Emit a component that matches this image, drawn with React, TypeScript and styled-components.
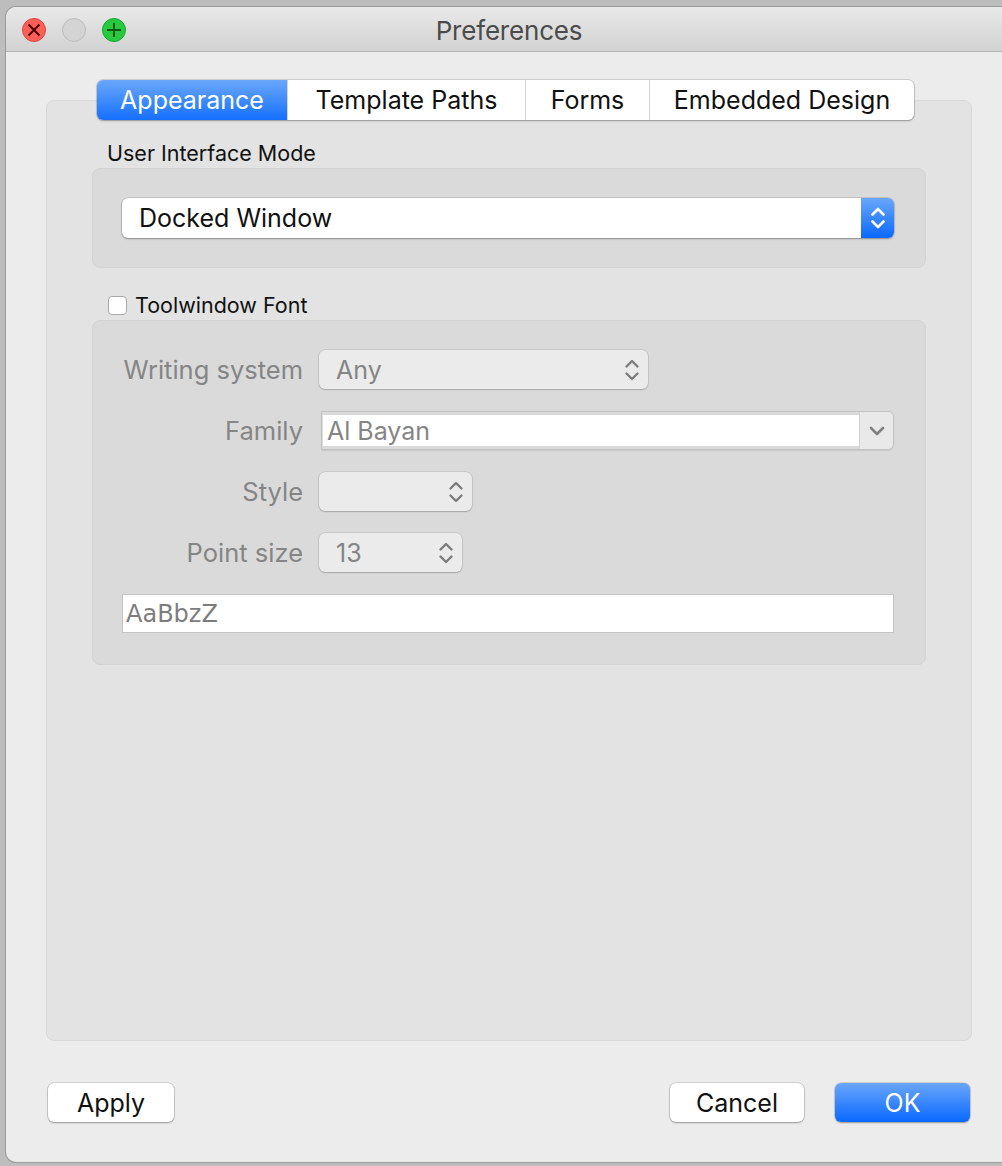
import React from "react";
import styled, { createGlobalStyle, css } from "styled-components";

const Global = createGlobalStyle`
  html, body { margin: 0; padding: 0; }
  body {
    background: #bdbdbd;
    font-family: Inter, "Liberation Sans", Arial, sans-serif;
    overflow: hidden;
    -webkit-font-smoothing: antialiased;
  }
  * { box-sizing: border-box; }
`;

const Page = styled.div`
  width: 1002px;
  height: 1166px;
  padding: 7px 0 0 6px;
  overflow: hidden;
`;

const Window = styled.div`
  width: 1006px;
  height: 1155px;
  background: #ececec;
  border-radius: 10px;
  box-shadow: 0 0 0 1px rgba(0, 0, 0, 0.18);
  display: flex;
  flex-direction: column;
  overflow: hidden;
`;

const TitleBar = styled.div`
  height: 45px;
  flex: none;
  display: grid;
  grid-template-columns: 1fr auto 1fr;
  align-items: center;
  padding-top: 2px;
  background: linear-gradient(#e9e9e9, #d2d2d2);
  border-bottom: 1px solid #b4b4b4;
`;

const Lights = styled.div`
  display: flex;
  gap: 16px;
  padding-left: 16px;
`;

const Light = styled.div<{ $kind: "close" | "min" | "max" }>`
  width: 24px;
  height: 24px;
  border-radius: 50%;
  display: flex;
  align-items: center;
  justify-content: center;
  ${(p) =>
    p.$kind === "close"
      ? css`background: #fd5e57; border: 1px solid #e0443e;`
      : p.$kind === "max"
      ? css`background: #28c840; border: 1px solid #14a92a;`
      : css`background: #d4d4d4; border: 1px solid #bcbcbc;`}
`;

const Title = styled.div`
  font-size: 26px;
  color: #4b4b4b;
  letter-spacing: -0.2px;
`;

const Body = styled.div`
  flex: 1;
  padding: 28px 40px 0;
  display: flex;
  flex-direction: column;
`;

const TabBar = styled.div`
  position: relative;
  z-index: 1;
  align-self: flex-start;
  margin-left: 51px;
  display: flex;
  height: 40px;
  background: #fff;
  border-radius: 6px;
  box-shadow: 0 0 0 1px rgba(0, 0, 0, 0.12), 0 1px 2px rgba(0, 0, 0, 0.25);
  overflow: hidden;
`;

const Tab = styled.div<{ $w: number; $active?: boolean }>`
  width: ${(p) => p.$w}px;
  display: flex;
  align-items: center;
  justify-content: center;
  font-size: 25px;
  color: #111;
  & + & { border-left: 1px solid #d4d4d4; }
  ${(p) =>
    p.$active &&
    css`
      color: #fff;
      background: linear-gradient(#6aa7fb, #1570fe);
    `}
`;

const Pane = styled.div`
  margin-top: -20px;
  height: 941px;
  background: #e3e3e3;
  border: 1px solid #d9d9d9;
  border-radius: 8px;
  padding: 39px 45px 0;
`;

const SmallLabel = styled.div`
  font-size: 21.5px;
  line-height: 26px;
  color: #111;
  margin: 0 0 2px 15px;
`;

const Group = styled.div<{ $h: number }>`
  height: ${(p) => p.$h}px;
  background: #dadada;
  border: 1px solid #d3d3d3;
  border-radius: 8px;
  padding: 29px 31px 30px 29px;
`;

const Combo = styled.div`
  height: 40px;
  display: flex;
  background: #fff;
  border-radius: 6px;
  box-shadow: 0 0 0 0.5px rgba(0, 0, 0, 0.2), 0 1px 2px rgba(0, 0, 0, 0.3);
  overflow: hidden;
`;

const ComboText = styled.div`
  flex: 1;
  display: flex;
  align-items: center;
  padding-left: 17px;
  font-size: 25px;
  color: #111;
`;

const BlueArrows = styled.div`
  width: 33px;
  display: flex;
  align-items: center;
  justify-content: center;
  background: linear-gradient(#6aa7fb, #0a68ff);
`;

const CheckRow = styled.label`
  height: 30px;
  margin: 22px 0 0 16px;
  display: flex;
  align-items: center;
  gap: 8px;
  font-size: 21.5px;
  color: #111;
`;

const Box = styled.span`
  width: 19px;
  height: 19px;
  background: #fff;
  border: 1px solid #a9a9a9;
  border-radius: 4px;
`;

const FontGrid = styled.div`
  display: grid;
  grid-template-columns: 181px 1fr;
  grid-auto-rows: 39px;
  column-gap: 16px;
  row-gap: 22px;
  align-items: center;
`;

const FieldLabel = styled.div`
  text-align: right;
  font-size: 25.5px;
  color: #858585;
`;

const Spin = styled.div<{ $w: number }>`
  width: ${(p) => p.$w}px;
  height: 39px;
  display: flex;
  align-items: center;
  justify-content: space-between;
  padding: 0 8px 0 17px;
  background: #ebebeb;
  border-radius: 6px;
  box-shadow: 0 0 0 0.5px rgba(0, 0, 0, 0.14), 0 1px 1.5px rgba(0, 0, 0, 0.18);
  font-size: 25px;
  color: #858585;
`;

const FamilyBox = styled.div`
  margin-left: 2px;
  height: 39px;
  display: flex;
  border: 1px solid #c2c2c2;
  border-radius: 0 6px 6px 0;
  overflow: hidden;
  box-shadow: 0 1px 1px rgba(0, 0, 0, 0.08);
`;

const FamilyText = styled.div`
  flex: 1;
  background: #fff;
  margin: 3px 0 3px 1px;
  display: flex;
  align-items: center;
  padding-left: 4px;
  font-size: 25px;
  color: #858585;
`;

const DropButton = styled.div`
  width: 34px;
  display: flex;
  align-items: center;
  justify-content: center;
  background: #e9e9e9;
  border-left: 1px solid #d2d2d2;
`;

const Preview = styled.div`
  grid-column: 1 / -1;
  height: 39px;
  background: #fff;
  border: 1px solid #c4c4c4;
  display: flex;
  align-items: center;
  padding-left: 3px;
  font-family: "DejaVu Sans", Verdana, sans-serif;
  font-size: 24px;
  color: #7d7d7d;
`;

const Footer = styled.div`
  display: flex;
  align-items: center;
  padding: 42px 2px 0;
  gap: 31px;
`;

const Button = styled.button<{ $w: number; $primary?: boolean }>`
  width: ${(p) => p.$w}px;
  height: 39px;
  font-family: inherit;
  font-size: 25px;
  border: none;
  border-radius: 6px;
  color: #111;
  background: #fff;
  box-shadow: 0 0 0 0.5px rgba(0, 0, 0, 0.22), 0 1px 2px rgba(0, 0, 0, 0.28);
  padding: 0;
  ${(p) =>
    p.$primary &&
    css`
      color: #fff;
      background: linear-gradient(#69a6fb, #0a68ff);
    `}
`;

const Spacer = styled.div`
  flex: 1;
`;

const UpDown = ({ color, w = 2.4 }: { color: string; w?: number }) => (
  <svg width="16" height="24" viewBox="0 0 16 24" fill="none">
    <path d="M2.5 8.5 L8 3 L13.5 8.5" stroke={color} strokeWidth={w} strokeLinecap="round" strokeLinejoin="round" />
    <path d="M2.5 15.5 L8 21 L13.5 15.5" stroke={color} strokeWidth={w} strokeLinecap="round" strokeLinejoin="round" />
  </svg>
);

export default function App() {
  return (
    <>
      <Global />
      <Page>
        <Window>
          <TitleBar>
            <Lights>
              <Light $kind="close">
                <svg width="14" height="14" viewBox="0 0 14 14">
                  <path d="M1.5 1.5 L12.5 12.5 M12.5 1.5 L1.5 12.5" stroke="#4a0002" strokeWidth="2" />
                </svg>
              </Light>
              <Light $kind="min" />
              <Light $kind="max">
                <svg width="16" height="16" viewBox="0 0 16 16">
                  <path d="M8 1 V15 M1 8 H15" stroke="#0a5a10" strokeWidth="2" />
                </svg>
              </Light>
            </Lights>
            <Title>Preferences</Title>
            <div />
          </TitleBar>
          <Body>
            <TabBar>
              <Tab $w={190} $active>Appearance</Tab>
              <Tab $w={238}>Template Paths</Tab>
              <Tab $w={124}>Forms</Tab>
              <Tab $w={265}>Embedded Design</Tab>
            </TabBar>
            <Pane>
              <SmallLabel>User Interface Mode</SmallLabel>
              <Group $h={100}>
                <Combo>
                  <ComboText>Docked Window</ComboText>
                  <BlueArrows>
                    <UpDown color="#fff" w={2.6} />
                  </BlueArrows>
                </Combo>
              </Group>
              <CheckRow>
                <Box />
                Toolwindow Font
              </CheckRow>
              <Group $h={345}>
                <FontGrid>
                  <FieldLabel>Writing system</FieldLabel>
                  <Spin $w={329}>
                    Any
                    <UpDown color="#7c7c7c" />
                  </Spin>
                  <FieldLabel>Family</FieldLabel>
                  <FamilyBox>
                    <FamilyText>Al Bayan</FamilyText>
                    <DropButton>
                      <svg width="16" height="10" viewBox="0 0 16 10" fill="none">
                        <path d="M2 2 L8 8 L14 2" stroke="#808080" strokeWidth="2.6" strokeLinecap="round" strokeLinejoin="round" />
                      </svg>
                    </DropButton>
                  </FamilyBox>
                  <FieldLabel>Style</FieldLabel>
                  <Spin $w={153}>
                    <span />
                    <UpDown color="#7c7c7c" />
                  </Spin>
                  <FieldLabel>Point size</FieldLabel>
                  <Spin $w={143}>
                    13
                    <UpDown color="#7c7c7c" />
                  </Spin>
                  <Preview>AaBbzZ</Preview>
                </FontGrid>
              </Group>
            </Pane>
            <Footer>
              <Button $w={126}>Apply</Button>
              <Spacer />
              <Button $w={134}>Cancel</Button>
              <Button $w={135} $primary>OK</Button>
            </Footer>
          </Body>
        </Window>
      </Page>
    </>
  );
}
